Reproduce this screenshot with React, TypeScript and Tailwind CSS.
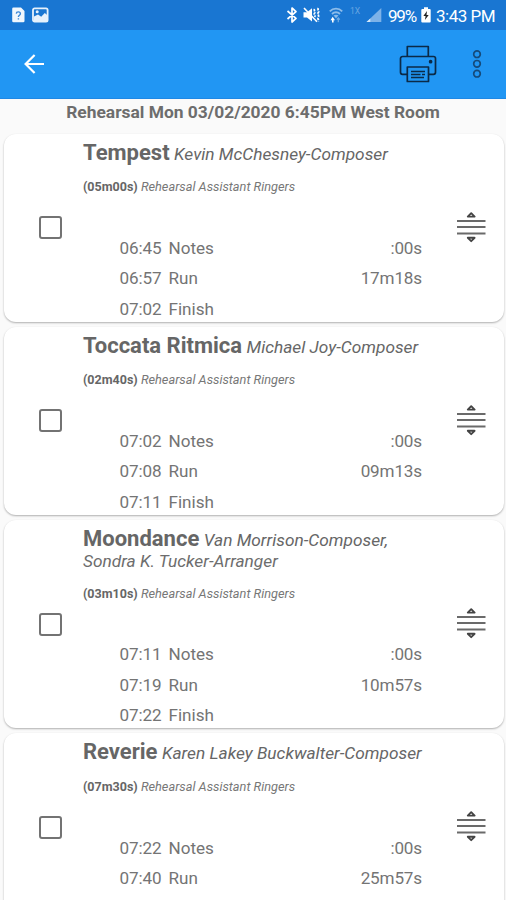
type Row = {
  time: string;
  label: string;
  length?: string;
};

type Piece = {
  title: string;
  credits: string[];
  duration: string;
  ensemble: string;
  rows: Row[];
};

const pieces: Piece[] = [
  {
    title: "Tempest",
    credits: ["Kevin McChesney-Composer"],
    duration: "(05m00s)",
    ensemble: "Rehearsal Assistant Ringers",
    rows: [
      { time: "06:45", label: "Notes", length: ":00s" },
      { time: "06:57", label: "Run", length: "17m18s" },
      { time: "07:02", label: "Finish" },
    ],
  },
  {
    title: "Toccata Ritmica",
    credits: ["Michael Joy-Composer"],
    duration: "(02m40s)",
    ensemble: "Rehearsal Assistant Ringers",
    rows: [
      { time: "07:02", label: "Notes", length: ":00s" },
      { time: "07:08", label: "Run", length: "09m13s" },
      { time: "07:11", label: "Finish" },
    ],
  },
  {
    title: "Moondance",
    credits: ["Van Morrison-Composer,", "Sondra K. Tucker-Arranger"],
    duration: "(03m10s)",
    ensemble: "Rehearsal Assistant Ringers",
    rows: [
      { time: "07:11", label: "Notes", length: ":00s" },
      { time: "07:19", label: "Run", length: "10m57s" },
      { time: "07:22", label: "Finish" },
    ],
  },
  {
    title: "Reverie",
    credits: ["Karen Lakey Buckwalter-Composer"],
    duration: "(07m30s)",
    ensemble: "Rehearsal Assistant Ringers",
    rows: [
      { time: "07:22", label: "Notes", length: ":00s" },
      { time: "07:40", label: "Run", length: "25m57s" },
    ],
  },
];

function StatusBar() {
  return (
    <div className="flex h-[30px] shrink-0 items-center bg-[#1976d2] pr-[11px] pl-3 text-white">
      <svg width="13" height="16" viewBox="0 0 13 16" className="shrink-0">
        <path d="M1.5 0.5H9L12.5 4V14a1.3 1.3 0 0 1-1.3 1.3H1.5A1.3 1.3 0 0 1 .2 14V1.8A1.3 1.3 0 0 1 1.5.5Z" fill="#f1f7fd" />
        <path d="M4.3 6.6c.1-2.4 4.1-2.3 4.1.1 0 1.6-2 1.6-2 3.3M6.4 11.3v1.3" fill="none" stroke="#3b87d6" strokeWidth="1.4" />
      </svg>
      <svg width="17" height="16" viewBox="0 0 17 16" className="ml-[7px] shrink-0">
        <rect x="1" y="1.3" width="14.6" height="13.2" rx="1.6" fill="#1976d2" stroke="#e6f1fc" strokeWidth="1.8" />
        <path d="M2 9.5 6 7.6l3.2 2.2L12.8 6l2.4 2v6H2Z" fill="#e6f1fc" />
        <circle cx="5.2" cy="4.8" r="1.5" fill="#e6f1fc" />
      </svg>

      <div className="ml-auto flex items-center">
        <svg width="12" height="18" viewBox="0 0 12 18" className="shrink-0">
          <path d="M1.5 5 10 12.4 6 16V2l4 3.6L1.5 13" fill="none" stroke="#fff" strokeWidth="1.7" strokeLinejoin="round" />
        </svg>
        <svg width="18" height="16" viewBox="0 0 18 16" className="ml-[5px] shrink-0">
          <path d="M0.5 5.3H4L9 1.2V14.6L4 10.5H.5Z" fill="#fff" />
          <path d="M1 1 14 14.8" stroke="#fff" strokeWidth="1.6" />
          <path
            d="M11.6 2c-1.3 1.5 1.3 2.6 0 4s1.3 2.6 0 4M15.3 1c-1.3 1.8 1.3 2.8 0 4.6s1.3 2.8 0 4.6.9 2.4 0 4"
            fill="none"
            stroke="#fff"
            strokeWidth="1.8"
            strokeDasharray="2.6 0.8"
          />
        </svg>
        <svg width="14" height="16" viewBox="0 0 14 16" className="ml-[8px] shrink-0">
          <path d="M.8 4.3C4.3.7 9.7.7 13.2 4.3M3 7c2.3-2.3 5.7-2.3 8 0" fill="none" stroke="#8cbcea" strokeWidth="1.9" />
          <path d="M4.5 8.6c1.4-1.2 3.6-1.2 5 0L7 11.2Z" fill="#8cbcea" />
          <path d="M3.7 9.8 6 13.2H1.5ZM3 13h1.6v2.4H3Z" fill="#fff" />
          <path d="M9.3 15.2V11M7.8 12.7l1.5-1.8 1.5 1.8" fill="none" stroke="#6fabe4" strokeWidth="1.2" />
        </svg>
        <span className="mb-[7px] ml-[7px] w-[11px] text-[8.5px] leading-none text-[#68a5e1]">1X</span>
        <svg width="16" height="16" viewBox="0 0 16 16" className="ml-[5px] shrink-0">
          <path d="M15.3 1v14H.5Z" fill="#7db2e8" />
          <path d="M4.3 11.4V15H.5Z" fill="#d6e8f9" />
        </svg>
        <span className="ml-[6px] w-[29px] pt-[3px] text-[17px] leading-none tracking-[-1.2px] whitespace-nowrap">99%</span>
        <svg width="10" height="16" viewBox="0 0 10 16" className="ml-[4px] shrink-0">
          <path d="M3 .3h4V2h1.7A1 1 0 0 1 9.7 3v11.500a1 1 0 0 1-1 1H1.300a1 1 0 0 1-1-1V3a1 1 0 0 1 1-1H3Z" fill="#fff" />
          <path d="M6 4 2.4 9h2.2L3.9 13 7.7 7.9H5.5Z" fill="#222" />
        </svg>
        <span className="ml-[5px] w-[59px] pt-[3px] text-[17px] leading-none tracking-[-0.5px] whitespace-nowrap">3:43 PM</span>
      </div>
    </div>
  );
}

function AppBar() {
  return (
    <header className="flex h-[69px] shrink-0 items-center border-b border-[#1f88e5] bg-[#2196f3] px-6">
      <button type="button" aria-label="Back">
        <svg width="20" height="20" viewBox="0 0 20 20" fill="none" stroke="#fff" strokeWidth="2.2">
          <path d="M20 10H2M10.6 1 1.6 10l9 9" />
        </svg>
      </button>
      <button type="button" aria-label="Print" className="ml-auto">
        <svg width="38" height="38" viewBox="0 0 38 38" fill="none" stroke="#0b2a47" strokeWidth="1.7" strokeLinejoin="round">
          <path d="M8.3 11.5V1.5h21v10" />
          <path d="M8 29.3H3.5a2 2 0 0 1-2-2V13.5a2 2 0 0 1 2-2h31a2 2 0 0 1 2 2v13.8a2 2 0 0 1-2 2H30" />
          <rect x="8.3" y="22" width="21.2" height="14.5" />
          <path d="M12 26.5h14M12 29.5h9.500M23 29.500h3M12 32.500h13" strokeWidth="1.4" />
          <circle cx="31.6" cy="16.7" r="1" fill="#0b2a47" />
        </svg>
      </button>
      <button type="button" aria-label="More options" className="ml-[35px]">
        <svg width="10" height="30" viewBox="0 0 10 30" fill="none" stroke="#154a7a" strokeWidth="1.7">
          <circle cx="5" cy="5.2" r="3.3" />
          <circle cx="5" cy="14.8" r="3.3" />
          <circle cx="5" cy="24.7" r="3.3" />
        </svg>
      </button>
    </header>
  );
}

function DragHandle() {
  return (
    <svg width="30" height="32" viewBox="0 0 30 32" fill="none" stroke="#6a6a6a" strokeWidth="1.9">
      <path d="M1 9h28.500M1 15h28.500M1 21.500h28.500" />
      <path
        d="m15.200 1.200 3.400 3.400h-6.800ZM15.200 29.200l3.400-3.400h-6.800Z"
        stroke="#444"
        strokeWidth="1.9"
        strokeLinejoin="round"
      />
    </svg>
  );
}

function PieceCard({ piece }: { piece: Piece }) {
  const [firstCredit, ...otherCredits] = piece.credits;

  return (
    <article className="flex shrink-0 items-center rounded-[12px] bg-white shadow-[0_1px_2px_rgba(0,0,0,0.3)]">
      <div className="flex w-[79px] shrink-0 pl-[35px]">
        <span role="checkbox" aria-checked="false" className="h-[23px] w-[23px] rounded-[3px] border-2 border-[#737373]" />
      </div>

      <div className="min-w-0 flex-1">
        <h2 className="h-[37px] pt-[4px] text-[22px] leading-[29px] font-bold whitespace-nowrap text-[#666]">
          {piece.title} <span className="-ml-px text-[17.3px] font-normal italic">{firstCredit}</span>
        </h2>
        {otherCredits.map((credit) => (
          <p key={credit} className="-mt-[6px] mb-[6px] h-[20.3px] text-[17.3px] leading-[20px] text-[#6d6d6d] italic">
            {credit}
          </p>
        ))}
        <p className="h-[24.400px] pt-[8.400px] text-[12.75px] leading-[16px] whitespace-nowrap text-[#777]">
          <b className="text-[12.5px] text-[#666]">{piece.duration}</b> <i>{piece.ensemble}</i>
        </p>
        <div className="-mb-[2.9px] min-h-[129.6px] pt-[38.4px] pl-[36.5px]">
          {piece.rows.map((row) => (
            <div key={row.label} className="flex h-[30.4px] items-center text-[17.1px] text-[#747474]">
              <span className="w-[49px] tracking-[-0.1px]">{row.time}</span>
              <span>{row.label}</span>
              <span className="ml-auto tracking-[-0.15px]">{row.length}</span>
            </div>
          ))}
        </div>
      </div>

      <div className="flex w-[82px] shrink-0 justify-end pr-[18px]">
        <DragHandle />
      </div>
    </article>
  );
}

export default function App() {
  return (
    <div className="flex h-[900px] flex-col overflow-hidden bg-[#fafafa] font-[Roboto,sans-serif]">
      <StatusBar />
      <AppBar />
      <h1 className="mt-[2px] h-[23px] shrink-0 text-center text-[17.4px] leading-[22px] font-bold whitespace-nowrap text-[#6d6d6d]">
        Rehearsal Mon 03/02/2020 6:45PM West Room
      </h1>
      <main className="mt-[9.800px] flex flex-col gap-[5px] pr-[2px] pl-[4px]">
        {pieces.map((piece) => (
          <PieceCard key={piece.title} piece={piece} />
        ))}
      </main>
    </div>
  );
}
